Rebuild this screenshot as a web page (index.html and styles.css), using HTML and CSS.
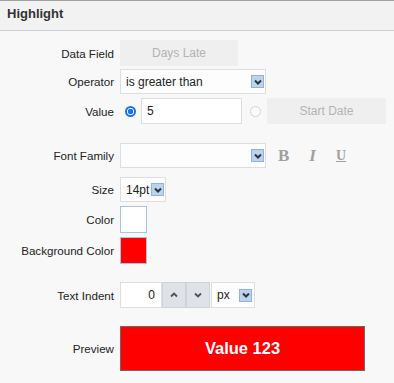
FILE: index.html
```html
<!DOCTYPE html>
<html lang="en">
<head>
    <meta charset="UTF-8">
    <title>Highlight</title>
    <link rel="stylesheet" href="styles.css">
</head>
<body>
    <div class="panel">
        <div class="header">Highlight</div>
        <div class="form">
            <div class="row r-data">
                <span class="lbl">Data Field</span>
                <div class="box disabled w-data">Days Late</div>
            </div>
            <div class="row r-op">
                <span class="lbl">Operator</span>
                <div class="select w-wide">
                    <span class="sel-text">is greater than</span>
                    <span class="arrow"><svg width="10" height="10" viewBox="0 0 10 10"><path d="M2 3.5 L5 6.5 L8 3.5" fill="none" stroke="#2b3440" stroke-width="2"/></svg></span>
                </div>
            </div>
            <div class="row r-value">
                <span class="lbl">Value</span>
                <span class="radio checked"></span>
                <div class="box input w-value">5</div>
                <span class="radio off"></span>
                <div class="box disabled w-date">Start Date</div>
            </div>
            <div class="row r-font">
                <span class="lbl">Font Family</span>
                <div class="select w-wide">
                    <span class="sel-text"></span>
                    <span class="arrow"><svg width="10" height="10" viewBox="0 0 10 10"><path d="M2 3.5 L5 6.5 L8 3.5" fill="none" stroke="#2b3440" stroke-width="2"/></svg></span>
                </div>
                <span class="fmt fmt-b">B</span>
                <span class="fmt fmt-i">I</span>
                <span class="fmt fmt-u">U</span>
            </div>
            <div class="row r-size">
                <span class="lbl">Size</span>
                <div class="select w-size">
                    <span class="sel-text">14pt</span>
                    <span class="arrow"><svg width="10" height="10" viewBox="0 0 10 10"><path d="M2 3.5 L5 6.5 L8 3.5" fill="none" stroke="#2b3440" stroke-width="2"/></svg></span>
                </div>
            </div>
            <div class="row r-color">
                <span class="lbl">Color</span>
                <span class="swatch white"></span>
            </div>
            <div class="row r-bg">
                <span class="lbl">Background Color</span>
                <span class="swatch red"></span>
            </div>
            <div class="row r-indent">
                <span class="lbl">Text Indent</span>
                <div class="box input num">0</div>
                <span class="step"><svg width="10" height="10" viewBox="0 0 10 10"><path d="M2 6.5 L5 3.5 L8 6.5" fill="none" stroke="#4a525a" stroke-width="1.8"/></svg></span>
                <span class="step"><svg width="10" height="10" viewBox="0 0 10 10"><path d="M2 3.5 L5 6.5 L8 3.5" fill="none" stroke="#4a525a" stroke-width="1.8"/></svg></span>
                <div class="select w-unit">
                    <span class="sel-text">px</span>
                    <span class="arrow"><svg width="10" height="10" viewBox="0 0 10 10"><path d="M2 3.5 L5 6.5 L8 3.5" fill="none" stroke="#2b3440" stroke-width="2"/></svg></span>
                </div>
            </div>
            <div class="row r-preview">
                <span class="lbl">Preview</span>
                <div class="preview">Value 123</div>
            </div>
        </div>
    </div>
</body>
</html>
```

FILE: styles.css
```css
* {
    box-sizing: border-box;
}

body {
    margin: 0;
    font-family: "Liberation Sans", Arial, sans-serif;
    font-size: 12px;
    color: #222;
    background-color: #f8f8f8;
}

.panel {
    width: 394px;
    height: 383px;
    border-top: 1px solid #a0a0a0;
}

.header {
    height: 30px;
    padding: 5px 0 0 7px;
    font-size: 13px;
    font-weight: bold;
    color: #333;
    background-color: #f2f2f2;
    border-bottom: 1px solid #cbd3da;
}

.form {
    padding-top: 9px;
}

.row {
    display: flex;
    align-items: center;
}

.lbl {
    width: 120px;
    padding-right: 6px;
    text-align: right;
    font-size: 11.6px;
    flex-shrink: 0;
}

.r-data { height: 26px; }
.r-op { height: 25px; margin-top: 3px; }
.r-value { height: 26px; margin-top: 4px; }
.r-font { height: 25px; margin-top: 19px; }
.r-size { height: 25px; margin-top: 9px; }
.r-color { height: 27px; margin-top: 4px; }
.r-bg { height: 27px; margin-top: 4px; }
.r-indent { height: 26px; margin-top: 18px; }
.r-preview { height: 45px; margin-top: 18px; }

.box {
    height: 100%;
    display: flex;
    align-items: center;
}

.disabled {
    justify-content: center;
    background-color: #efefef;
    color: #b3b3b3;
}

.input {
    background-color: #fff;
    border: 1px solid #dcdfe2;
    padding-left: 5px;
}

.w-data { width: 118px; }
.w-value { width: 101px; margin-left: 5px; }
.w-date { width: 119px; margin-left: 6px; }

.radio {
    width: 11px;
    height: 11px;
    border-radius: 50%;
    flex-shrink: 0;
}

.radio.checked {
    margin-left: 5px;
    border: 2px solid #1a73e8;
    background: radial-gradient(circle, #1a73e8 0, #1a73e8 2.5px, #fff 3px);
}

.radio.off {
    margin-left: 8px;
    border: 1px solid #d4d4d4;
    background-color: #fafafa;
}

.select {
    height: 100%;
    display: flex;
    align-items: center;
    background-color: #fdfdfd;
    border: 1px solid #dcdfe2;
    padding: 0 1px 0 5px;
}

.sel-text {
    flex: 1;
}

.arrow {
    width: 13px;
    height: 13px;
    display: flex;
    align-items: center;
    justify-content: center;
    background-color: #bcd3ee;
    border: 1px solid #93b2d8;
}

.w-wide { width: 146px; }
.w-size { width: 46px; }
.w-unit { width: 44px; margin-left: 1px; padding-right: 2px; }

.fmt {
    font-family: "Liberation Serif", serif;
    font-weight: bold;
    font-size: 17px;
    color: #a0a0a0;
}

.fmt-b { margin-left: 12px; }
.fmt-i { margin-left: 20px; font-style: italic; }
.fmt-u { margin-left: 20px; font-size: 14px; text-decoration: underline; }

.swatch {
    width: 27px;
    height: 27px;
    border: 1px solid #a9c3df;
}

.swatch.white { background-color: #fff; }
.swatch.red { background-color: #ff0000; }

.num {
    width: 42px;
    justify-content: flex-end;
    padding-right: 6px;
}

.step {
    width: 24px;
    height: 100%;
    display: flex;
    align-items: center;
    justify-content: center;
    background-color: #dfe3e7;
    border: 1px solid #cdd3d8;
}

.preview {
    width: 245px;
    height: 100%;
    display: flex;
    align-items: center;
    justify-content: center;
    background-color: #ff0000;
    border: 1px solid #6a6a6a;
    color: #fff;
    font-size: 16.5px;
    font-weight: bold;
}
```
